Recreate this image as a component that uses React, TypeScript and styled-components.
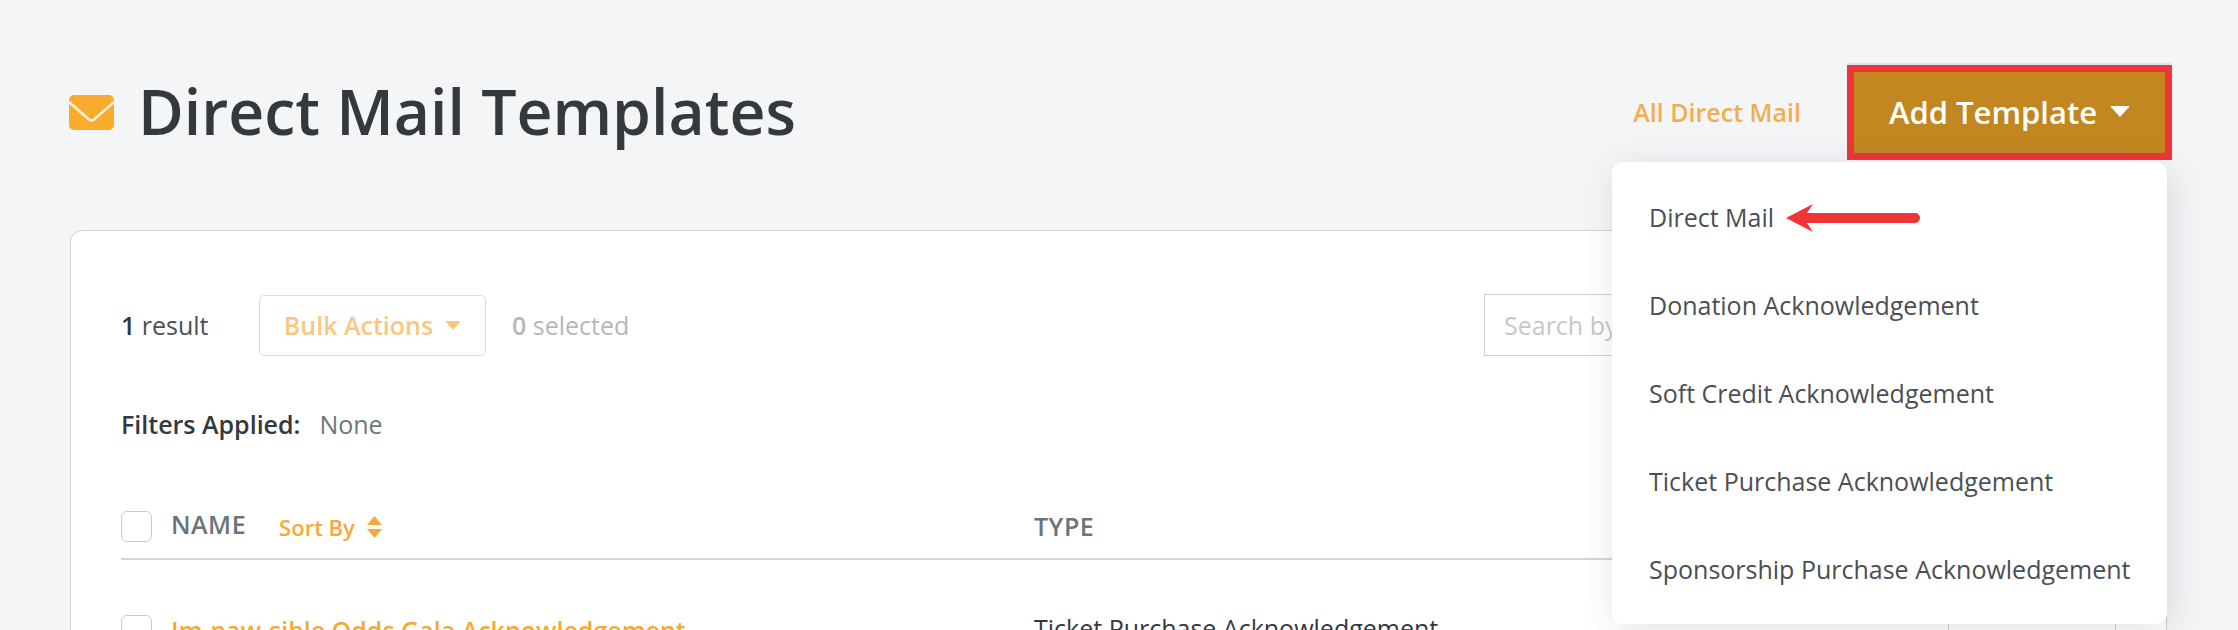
import React from 'react';
import styled, { createGlobalStyle } from 'styled-components';

const menuItems = [
  'Direct Mail',
  'Donation Acknowledgement',
  'Soft Credit Acknowledgement',
  'Ticket Purchase Acknowledgement',
  'Sponsorship Purchase Acknowledgement',
];

const App = (): JSX.Element => {
  return (
    <Page>
      <GlobalStyle />
      <Header>
        <TitleGroup>
          <MailIcon viewBox="0 0 45 35">
            <rect width="45" height="35" rx="5" fill="#f9ab2e" />
            <path d="M0 7 L20 24.5 Q22.5 26.5 25 24.5 L45 7" fill="none" stroke="#fbf0dc" strokeWidth="2.6" />
          </MailIcon>
          <Title>Direct Mail Templates</Title>
        </TitleGroup>
        <HeaderActions>
          <AllLink>All Direct Mail</AllLink>
          <AddTemplate>
            Add Template
            <Caret $size={10} $color="#fff" />
          </AddTemplate>
          <Menu>
            {menuItems.map((item) => (
              <MenuItem key={item}>{item}</MenuItem>
            ))}
            <ArrowMark viewBox="0 0 134 28">
              <path d="M0 14 L27 0 L21 9 H129 a5 5 0 0 1 0 10 H21 L27 28 Z" fill="#ef3535" />
            </ArrowMark>
          </Menu>
        </HeaderActions>
      </Header>
      <Card>
        <Toolbar>
          <ResultCount>
            <strong>1</strong> result
          </ResultCount>
          <BulkActions>
            Bulk Actions
            <Caret $size={8} $color="#fbc77c" />
          </BulkActions>
          <Selected>
            <strong>0</strong> selected
          </Selected>
          <SearchBox>Search by name</SearchBox>
        </Toolbar>
        <Filters>
          <FilterLabel>Filters Applied:</FilterLabel>
          <FilterValue>None</FilterValue>
        </Filters>
        <TableHead>
          <NameCell>
            <Checkbox />
            <HeadLabel $lift={3}>NAME</HeadLabel>
            <SortBy>
              Sort By
              <SortIcon viewBox="0 0 15 22">
                <path d="M7.5 0 L15 9 H0 Z M7.5 22 L0 13 H15 Z" fill="#f5a93a" />
              </SortIcon>
            </SortBy>
          </NameCell>
          <HeadLabel $lift={1}>TYPE</HeadLabel>
        </TableHead>
        <TableRow>
          <NameCell>
            <Checkbox />
            <RowLink>Im-paw-sible Odds Gala Acknowledgement</RowLink>
          </NameCell>
          <RowType>Ticket Purchase Acknowledgement</RowType>
          <RowActions />
        </TableRow>
      </Card>
    </Page>
  );
};

const GlobalStyle = createGlobalStyle`
  html, body {
    margin: 0;
    height: 100%;
    background: #f4f5f7;
    overflow: hidden;
  }

  body {
    font-family: "Open Sans", "Noto Sans", sans-serif;
    font-size: 25px;
    color: #33393e;
  }
`;

const Page = styled.div`
  box-sizing: border-box;
  width: 2238px;
  height: 630px;
  padding: 65px 71px 0 70px;
  overflow: hidden;
`;

const Header = styled.header`
  display: flex;
  align-items: center;
  justify-content: space-between;
  height: 95px;
  margin-bottom: 70px;
`;

const TitleGroup = styled.div`
  display: flex;
  align-items: center;
  gap: 24px;
`;

const MailIcon = styled.svg`
  width: 45px;
  height: 35px;
  margin-left: -1px;
`;

const Title = styled.h1`
  margin: -2px 0 0;
  font-size: 62.5px;
  font-weight: 600;
  line-height: 1;
  color: #33393e;
`;

const HeaderActions = styled.div`
  position: relative;
  display: flex;
  align-items: center;
  gap: 46px;
  margin-right: -5px;
`;

const AllLink = styled.a`
  margin-top: -2px;
  font-size: 25px;
  font-weight: 600;
  color: #f2ae4e;
`;

const AddTemplate = styled.button`
  display: flex;
  align-items: center;
  justify-content: center;
  gap: 13px;
  box-sizing: border-box;
  width: 325px;
  height: 95px;
  padding: 0 0 2px;
  border: 7px solid #ef3535;
  background: #c28720;
  box-shadow: 0 -3px 0 -1px #d6e6f1;
  font-family: inherit;
  font-size: 31px;
  font-weight: 600;
  color: #fff;
`;

const Caret = styled.span<{ $size: number; $color: string }>`
  display: inline-block;
  width: 0;
  height: 0;
  border-left: ${(props) => props.$size}px solid transparent;
  border-right: ${(props) => props.$size}px solid transparent;
  border-top: ${(props) => Math.round(props.$size * 1.1)}px solid ${(props) => props.$color};
  border-radius: 2px;
`;

const Menu = styled.div`
  position: absolute;
  top: 97px;
  right: 5px;
  z-index: 2;
  box-sizing: border-box;
  width: 555px;
  height: 462px;
  padding: 11px 0 10px 37px;
  background: #fff;
  border-radius: 11px;
  box-shadow: 4px 6px 34px rgba(60, 75, 85, 0.16);
`;

const MenuItem = styled.div`
  display: flex;
  align-items: center;
  height: 88px;
  font-size: 25px;
  font-weight: 400;
  color: #4a4f54;
`;

const ArrowMark = styled.svg`
  position: absolute;
  top: 42px;
  left: 174px;
  width: 134px;
  height: 28px;
`;

const Card = styled.section`
  box-sizing: border-box;
  height: 600px;
  padding: 63px 50px 0 50px;
  background: #fff;
  border: 1px solid #ccd0d4;
  border-radius: 12px;
`;

const Toolbar = styled.div`
  display: flex;
  align-items: center;
  height: 62px;
  line-height: 60px;
`;

const ResultCount = styled.span`
  width: 138px;
  color: #4b5155;

  strong {
    font-weight: 600;
    color: #33393e;
  }
`;

const BulkActions = styled.div`
  display: flex;
  align-items: center;
  justify-content: center;
  gap: 12px;
  box-sizing: border-box;
  width: 227px;
  height: 61px;
  border: 1px solid #dcdfe2;
  border-radius: 5px;
  font-weight: 600;
  color: #f9c77f;
`;

const Selected = styled.span`
  margin-left: 26px;
  color: #b5b8bb;

  strong {
    font-weight: 600;
  }
`;

const SearchBox = styled.div`
  display: flex;
  align-items: center;
  box-sizing: border-box;
  width: 632px;
  height: 62px;
  margin-left: auto;
  padding-left: 19px;
  border: 1px solid #ccd0d4;
  color: #c5c8cb;
`;

const Filters = styled.div`
  display: flex;
  align-items: center;
  gap: 19px;
  margin-top: 51px;
  height: 34px;
`;

const FilterLabel = styled.span`
  font-weight: 600;
  color: #33393e;
`;

const FilterValue = styled.span`
  color: #6f7679;
`;

const TableHead = styled.div`
  display: grid;
  grid-template-columns: 913px 1fr;
  align-items: end;
  box-sizing: border-box;
  height: 119px;
  padding-bottom: 15px;
  border-bottom: 2px solid #d3d6d9;
`;

const NameCell = styled.div`
  display: flex;
  align-items: center;
`;

const Checkbox = styled.span`
  box-sizing: border-box;
  flex-shrink: 0;
  width: 31px;
  height: 31px;
  margin-right: 19px;
  background: #fff;
  border: 1px solid #c8cbce;
  border-radius: 6px;
`;

const HeadLabel = styled.span<{ $lift: number }>`
  padding-bottom: ${(props) => props.$lift}px;
  font-weight: 600;
  line-height: 31px;
  letter-spacing: 0.5px;
  color: #6b747b;
`;

const SortBy = styled.span`
  display: flex;
  align-items: center;
  gap: 12px;
  margin-left: 33px;
  padding-top: 1px;
  font-size: 22px;
  font-weight: 600;
  color: #f5a93a;
`;

const SortIcon = styled.svg`
  width: 15px;
  height: 22px;
`;

const TableRow = styled.div`
  display: grid;
  grid-template-columns: 913px 1fr 168px;
  align-items: start;
  padding-top: 55px;
`;

const RowLink = styled.a`
  font-weight: 600;
  line-height: 27px;
  color: #f5a935;
`;

const RowType = styled.span`
  line-height: 27px;
  color: #33393e;
`;

const RowActions = styled.div`
  box-sizing: border-box;
  height: 60px;
  border: 1px solid #ccd0d4;
`;

export default App;
